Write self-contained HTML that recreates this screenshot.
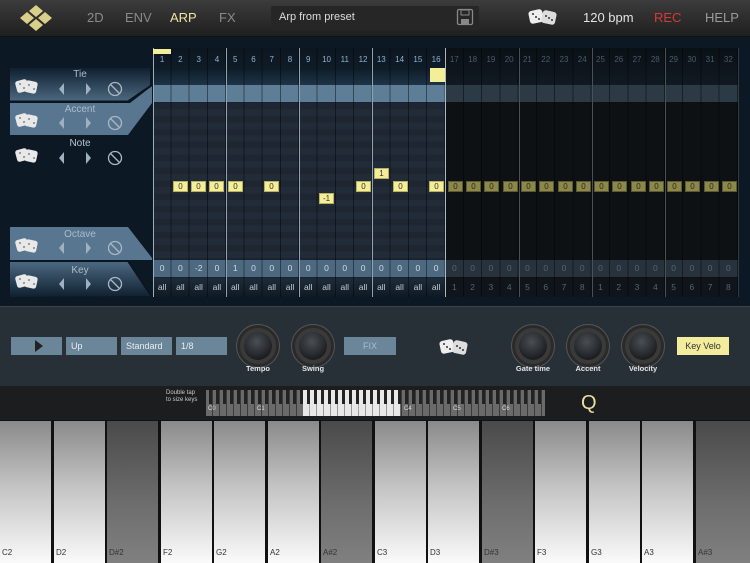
<!DOCTYPE html>
<html><head><meta charset="utf-8"><style>
*{margin:0;padding:0;box-sizing:border-box}
body{width:750px;height:563px;overflow:hidden;background:#0c1824;font-family:"Liberation Sans",sans-serif;position:relative}
.a{position:absolute}
.top{left:0;top:0;width:750px;height:37px;background:linear-gradient(#3c3c3c,#1f1f1f);border-bottom:1px solid #111}
.nav{top:10px;font-size:13px;color:#8a8a8a}
.row{position:absolute;left:153px;width:585px;display:flex}
.row span{width:18.28px;text-align:center;flex:none}
.gl{position:absolute;top:48px;height:249px;width:1px}
.yb{position:absolute;width:15px;height:11px;background:#f4ee98;border:1px solid #b8b060;font-size:8px;line-height:10px;text-align:center;color:#333}
.ob{background:#8c874a;border-color:#5c5830;color:#2a2a18}
.lbl{font-size:10px;color:#a9bccb;text-align:center;width:140px;left:10px}
.box{position:absolute;top:337px;height:18px;background:#6b8599;color:#e8eef2;font-size:9px;line-height:18px;padding-left:5px}
.kn{position:absolute;width:42px;height:42px;border-radius:50%;background:#3a3a3a;border:3px solid #2a2a2a;box-shadow:0 0 0 1px #555}
.kn::after{content:"";position:absolute;left:4px;top:4px;width:28px;height:28px;border-radius:50%;background:radial-gradient(circle at 45% 35%,#4a4f55,#1a1c1f 75%)}
.kl{position:absolute;top:364px;font-size:7.5px;font-weight:bold;color:#dfe6ea;width:60px;text-align:center}
.key{position:absolute;top:421px;height:142px;width:51px;background:linear-gradient(#8a8a8a,#c2c2c2 45%,#fafafa);font-size:8px;color:#333;padding:0 0 6px 2px;display:flex;align-items:flex-end}
.key.b{background:linear-gradient(#4a4a4a,#6e6e6e 60%,#808080)}
</style></head><body>
<div class="a top"></div>
<svg class="a" style="left:17px;top:4px" width="38" height="28" viewBox="0 0 38 28"><g fill="#d8cf8a"><polygon points="19,1 26,7 19,13 12,7"/><polygon points="10,8 17,14 10,20 3,14"/><polygon points="28,8 35,14 28,20 21,14"/><polygon points="19,15 26,21 19,27 12,21"/></g></svg>
<div class="a nav" style="left:87px">2D</div>
<div class="a nav" style="left:125px">ENV</div>
<div class="a nav" style="left:170px;color:#efe4a0">ARP</div>
<div class="a nav" style="left:219px">FX</div>
<div class="a" style="left:271px;top:6px;width:208px;height:24px;background:#262626;border-radius:2px"></div>
<div class="a" style="left:279px;top:11px;font-size:11px;color:#ddd">Arp from preset</div>
<svg class="a" style="left:456px;top:8px" width="18" height="18" viewBox="0 0 18 18"><rect x="1.5" y="1.5" width="15" height="15" rx="1.5" fill="none" stroke="#888" stroke-width="1.3"/><rect x="5" y="2" width="8" height="5" fill="none" stroke="#888"/><rect x="5" y="11" width="8" height="5" fill="#888"/></svg>
<svg class="a" style="left:527px;top:7px" width="32" height="20" viewBox="0 0 32 20"><rect x="2" y="3" width="14" height="13" rx="3" fill="#eee" transform="rotate(-12 9 9)"/><rect x="15" y="4" width="14" height="13" rx="3" fill="#ddd" transform="rotate(12 22 10)"/><g fill="#333"><circle cx="6" cy="7" r="1"/><circle cx="9" cy="10" r="1"/><circle cx="12" cy="12" r="1"/><circle cx="19" cy="9" r="1"/><circle cx="25" cy="13" r="1"/><circle cx="22" cy="11" r="1"/></g></svg>
<div class="a" style="left:583px;top:10px;font-size:13px;color:#e2e2e2">120 bpm</div>
<div class="a" style="left:654px;top:10px;font-size:13px;color:#d83838">REC</div>
<div class="a" style="left:705px;top:10px;font-size:13px;color:#9a9a9a">HELP</div>

<svg class="a" style="left:0;top:40px" width="160" height="262" viewBox="0 40 160 262">
<defs><linearGradient id="tg" x1="0" y1="0" x2="0" y2="1"><stop offset="0" stop-color="#0f2030"/><stop offset="1" stop-color="#4c6880"/></linearGradient>
<linearGradient id="kg" x1="0" y1="0" x2="0" y2="1"><stop offset="0" stop-color="#4c6880"/><stop offset="1" stop-color="#0f2030"/></linearGradient></defs>
<polygon points="10,68 150,68 150,86 128,101 10,101" fill="url(#tg)"/>
<polygon points="10,103 130,103 152,86 152,103 128,135 10,135" fill="#587690"/>
<polygon points="10,227 128,227 152,258 152,260 10,260" fill="#587690"/>
<polygon points="10,262 128,262 152,296 10,297" fill="url(#kg)"/>
<polyline points="10,101.5 128,101.5 152,85" fill="none" stroke="#0a1520" stroke-width="2"/>
<polyline points="10,261 128,261 152,297" fill="none" stroke="#0a1520" stroke-width="2"/>
</svg>
<div class="a lbl" style="top:69px">Tie</div>
<div class="a lbl" style="top:104px">Accent</div>
<div class="a lbl" style="top:138px;color:#b8c6d2">Note</div>
<div class="a lbl" style="top:229px">Octave</div>
<div class="a lbl" style="top:265px">Key</div>
<svg class="a" style="left:10px;top:40px" width="130" height="260" viewBox="0 40 130 260">
<g id="ic"><g fill="#e8e8e8"><rect x="6" y="80" width="12" height="12" rx="2.5" transform="rotate(-15 12 86)"/><rect x="15" y="81" width="12" height="12" rx="2.5" transform="rotate(12 21 87)"/></g>
<g fill="#666"><circle cx="10" cy="84" r=".9"/><circle cx="14" cy="88" r=".9"/><circle cx="19" cy="85" r=".9"/><circle cx="24" cy="89" r=".9"/></g>
<polygon points="54,83 49,89 54,95" fill="#9fb0bf"/><polygon points="76,83 81,89 76,95" fill="#9fb0bf"/>
<circle cx="105" cy="89" r="6.5" fill="none" stroke="#aab8c4" stroke-width="1.3"/><line x1="100.5" y1="84.5" x2="109.5" y2="93.5" stroke="#aab8c4" stroke-width="1.3"/></g>
<use href="#ic" y="34"/><use href="#ic" y="69"/><use href="#ic" y="159"/><use href="#ic" y="195"/>
</svg>

<div class="a" style="left:153px;top:48px;width:293px;height:249px;background:#1a2430"></div>
<div class="a" style="left:446px;top:48px;width:292px;height:249px;background:#0e1114"></div>
<div class="a" style="left:153px;top:48px;width:585px;height:37px;background:linear-gradient(#0c1620 0%,#0f1c28 55%,#1e3448 100%)"></div>
<div class="a" style="left:446px;top:48px;width:292px;height:37px;background:linear-gradient(#0a1016,#111a22)"></div>
<div class="a" style="left:153px;top:103px;width:293px;height:155px;background:repeating-linear-gradient(#1d2631 0 6.45px,#222c38 6.45px 12.9px)"></div>
<div class="a" style="left:153px;top:85px;width:293px;height:17px;background:#5e7e98"></div>
<div class="a" style="left:446px;top:85px;width:292px;height:17px;background:#2c3a46"></div>
<div class="a" style="left:153px;top:260px;width:293px;height:17px;background:#4d6980"></div>
<div class="a" style="left:446px;top:260px;width:292px;height:17px;background:#27323d"></div>
<div class="a" style="left:153px;top:278px;width:293px;height:19px;background:linear-gradient(#1e2c3a,#101a24)"></div>
<div class="a" style="left:446px;top:278px;width:292px;height:19px;background:#0f151b"></div>
<div class="a" style="left:153px;top:48px;width:585px;height:249px;background:repeating-linear-gradient(90deg,transparent 0 17.28px,rgba(0,0,0,.45) 17.28px 18.28px)"></div>
<div class="gl" style="left:153px;background:#9aaebe"></div><div class="gl" style="left:226px;background:#8ea2b2"></div><div class="gl" style="left:299px;background:#8ea2b2"></div><div class="gl" style="left:372px;background:#8ea2b2"></div><div class="gl" style="left:445px;background:#a8b8c4"></div><div class="gl" style="left:519px;background:#4a5058"></div><div class="gl" style="left:592px;background:#4a5058"></div><div class="gl" style="left:665px;background:#4a5058"></div><div class="gl" style="left:738px;background:#333b44"></div>
<div class="a" style="left:153px;top:49px;width:18px;height:5px;background:#f4ee98"></div>
<div class="a" style="left:430px;top:68px;width:15px;height:14px;background:#f4ee98"></div>
<div class="row" style="top:55px;font-size:8px;color:#8fb2cf"><span>1</span><span>2</span><span>3</span><span>4</span><span>5</span><span>6</span><span>7</span><span>8</span><span>9</span><span>10</span><span>11</span><span>12</span><span>13</span><span>14</span><span>15</span><span>16</span><span style="color:#4c5a66">17</span><span style="color:#4c5a66">18</span><span style="color:#4c5a66">19</span><span style="color:#4c5a66">20</span><span style="color:#4c5a66">21</span><span style="color:#4c5a66">22</span><span style="color:#4c5a66">23</span><span style="color:#4c5a66">24</span><span style="color:#4c5a66">25</span><span style="color:#4c5a66">26</span><span style="color:#4c5a66">27</span><span style="color:#4c5a66">28</span><span style="color:#4c5a66">29</span><span style="color:#4c5a66">30</span><span style="color:#4c5a66">31</span><span style="color:#4c5a66">32</span></div>
<div class="row" style="top:263px;font-size:8.5px;color:#cfdbe4"><span>0</span><span>0</span><span>-2</span><span>0</span><span>1</span><span>0</span><span>0</span><span>0</span><span>0</span><span>0</span><span>0</span><span>0</span><span>0</span><span>0</span><span>0</span><span>0</span><span style="color:#56646f">0</span><span style="color:#56646f">0</span><span style="color:#56646f">0</span><span style="color:#56646f">0</span><span style="color:#56646f">0</span><span style="color:#56646f">0</span><span style="color:#56646f">0</span><span style="color:#56646f">0</span><span style="color:#56646f">0</span><span style="color:#56646f">0</span><span style="color:#56646f">0</span><span style="color:#56646f">0</span><span style="color:#56646f">0</span><span style="color:#56646f">0</span><span style="color:#56646f">0</span><span style="color:#56646f">0</span></div>
<div class="row" style="top:282px;font-size:8.5px;color:#c0ccd6"><span>all</span><span>all</span><span>all</span><span>all</span><span>all</span><span>all</span><span>all</span><span>all</span><span>all</span><span>all</span><span>all</span><span>all</span><span>all</span><span>all</span><span>all</span><span>all</span><span style="color:#56646f">1</span><span style="color:#56646f">2</span><span style="color:#56646f">3</span><span style="color:#56646f">4</span><span style="color:#56646f">5</span><span style="color:#56646f">6</span><span style="color:#56646f">7</span><span style="color:#56646f">8</span><span style="color:#56646f">1</span><span style="color:#56646f">2</span><span style="color:#56646f">3</span><span style="color:#56646f">4</span><span style="color:#56646f">5</span><span style="color:#56646f">6</span><span style="color:#56646f">7</span><span style="color:#56646f">8</span></div>
<div class="yb" style="left:173px;top:181px">0</div><div class="yb" style="left:191px;top:181px">0</div><div class="yb" style="left:209px;top:181px">0</div><div class="yb" style="left:228px;top:181px">0</div><div class="yb" style="left:264px;top:181px">0</div><div class="yb" style="left:356px;top:181px">0</div><div class="yb" style="left:393px;top:181px">0</div><div class="yb" style="left:429px;top:181px">0</div>
<div class="yb" style="left:319px;top:193px">-1</div><div class="yb" style="left:374px;top:168px">1</div>
<div class="yb ob" style="left:448px;top:181px">0</div><div class="yb ob" style="left:466px;top:181px">0</div><div class="yb ob" style="left:484px;top:181px">0</div><div class="yb ob" style="left:503px;top:181px">0</div><div class="yb ob" style="left:521px;top:181px">0</div><div class="yb ob" style="left:539px;top:181px">0</div><div class="yb ob" style="left:558px;top:181px">0</div><div class="yb ob" style="left:576px;top:181px">0</div><div class="yb ob" style="left:594px;top:181px">0</div><div class="yb ob" style="left:612px;top:181px">0</div><div class="yb ob" style="left:631px;top:181px">0</div><div class="yb ob" style="left:649px;top:181px">0</div><div class="yb ob" style="left:667px;top:181px">0</div><div class="yb ob" style="left:685px;top:181px">0</div><div class="yb ob" style="left:704px;top:181px">0</div><div class="yb ob" style="left:722px;top:181px">0</div>

<div class="a" style="left:0;top:306px;width:750px;height:80px;background:#283037;border-top:1px solid #3a434b"></div>
<div class="box" style="left:11px;width:51px"><svg width="10" height="12" style="margin:3px 0 0 18px"><polygon points="1,0 9,6 1,12" fill="#222"/></svg></div>
<div class="box" style="left:66px;width:51px">Up</div>
<div class="box" style="left:121px;width:51px">Standard</div>
<div class="box" style="left:176px;width:51px">1/8</div>
<div class="box" style="left:344px;width:52px;text-align:center;padding:0;color:#a9bdcb">FIX</div>
<div class="box" style="left:677px;width:52px;background:#f2ec9c;color:#333;text-align:center;padding:0">Key Velo</div>
<div class="kn" style="left:237px;top:325px"></div><div class="kn" style="left:292px;top:325px"></div>
<div class="kn" style="left:512px;top:325px"></div><div class="kn" style="left:567px;top:325px"></div><div class="kn" style="left:622px;top:325px"></div>
<div class="kl" style="left:228px">Tempo</div><div class="kl" style="left:283px">Swing</div>
<div class="kl" style="left:503px">Gate time</div><div class="kl" style="left:558px">Accent</div><div class="kl" style="left:613px">Velocity</div>
<svg class="a" style="left:438px;top:337px" width="32" height="20" viewBox="0 0 32 20"><rect x="2" y="3" width="14" height="13" rx="3" fill="#eee" transform="rotate(-12 9 9)"/><rect x="15" y="4" width="14" height="13" rx="3" fill="#ddd" transform="rotate(12 22 10)"/><g fill="#333"><circle cx="6" cy="7" r="1"/><circle cx="9" cy="10" r="1"/><circle cx="12" cy="12" r="1"/><circle cx="19" cy="9" r="1"/><circle cx="25" cy="13" r="1"/><circle cx="22" cy="11" r="1"/></g></svg>

<div class="a" style="left:0;top:386px;width:750px;height:35px;background:#1b1d1f"></div>
<div class="a" style="left:166px;top:390px;font-size:6px;color:#ccc;line-height:7px">Double tap<br>to size keys</div>
<div class="a" style="left:206px;top:390px;width:339px;height:26px;background:repeating-linear-gradient(90deg,#6a6a6a 0 6px,#3a3a3a 6px 7px)"></div>
<div class="a" style="left:303px;top:390px;width:97px;height:26px;background:repeating-linear-gradient(90deg,#e8e8e8 0 6px,#999 6px 7px)"></div>
<div class="a" style="left:206px;top:390px;width:339px;height:14px;background:repeating-linear-gradient(90deg,transparent 0 3px,#222 3px 6px,transparent 6px 7px)"></div>
<div class="a" style="left:208px;top:406px;font-size:6px;color:#ddd;width:340px"><span style="position:absolute;left:0">C0</span><span style="position:absolute;left:49px">C1</span><span style="position:absolute;left:98px">C2</span><span style="position:absolute;left:147px">C3</span><span style="position:absolute;left:196px">C4</span><span style="position:absolute;left:245px">C5</span><span style="position:absolute;left:294px">C6</span></div>
<div class="a" style="left:581px;top:392px;font-size:20px;color:#ebdfa2">Q</div>

<div class="a" style="left:0;top:420px;width:750px;height:143px;background:#111"></div>
<div class="key" style="left:0">C2</div>
<div class="key" style="left:54px">D2</div>
<div class="key b" style="left:107px">D#2</div>
<div class="key" style="left:161px">F2</div>
<div class="key" style="left:214px">G2</div>
<div class="key" style="left:268px">A2</div>
<div class="key b" style="left:321px">A#2</div>
<div class="key" style="left:375px">C3</div>
<div class="key" style="left:428px">D3</div>
<div class="key b" style="left:482px">D#3</div>
<div class="key" style="left:535px">F3</div>
<div class="key" style="left:589px">G3</div>
<div class="key" style="left:642px">A3</div>
<div class="key b" style="left:696px;width:54px">A#3</div>
</body></html>
